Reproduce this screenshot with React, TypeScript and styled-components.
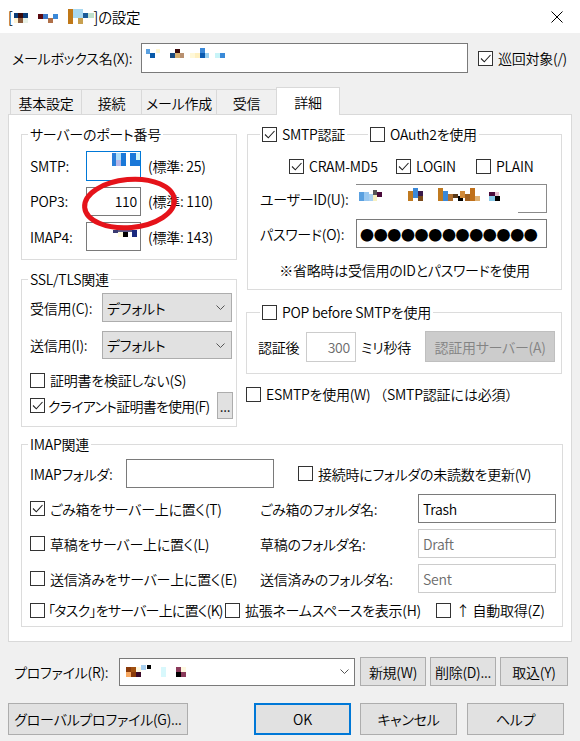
import React from 'react';
import styled, { createGlobalStyle } from 'styled-components';

const GlobalStyle = createGlobalStyle`
  html, body { margin: 0; padding: 0; background: #f0f0f0; }
  body {
    font-family: "Noto Sans CJK JP", "Noto Sans", sans-serif;
    font-size: 14px;
    font-weight: 350;
    line-height: 20px;
    letter-spacing: -0.25px;
    color: #000;
    font-feature-settings: "palt";
  }
  * { box-sizing: border-box; }
`;

type Cell = [number, number, number, number, string];

const MosaicSvg = styled.svg`
  display: block;
  flex-shrink: 0;
`;

const Mosaic = ({ w, h, cells }: { w: number; h: number; cells: Cell[] }) => (
  <MosaicSvg width={w} height={h} viewBox={`0 0 ${w} ${h}`}>
    {cells.map((c, i) => (
      <rect key={i} x={c[0]} y={c[1]} width={c[2]} height={c[3]} fill={c[4]} />
    ))}
  </MosaicSvg>
);

const Window = styled.div`
  position: relative;
  width: 580px;
  height: 741px;
  background: #f0f0f0;
  display: flex;
  flex-direction: column;
  overflow: hidden;
`;

const TitleBar = styled.div`
  height: 33px;
  flex-shrink: 0;
  background: #fff;
  display: flex;
  align-items: center;
  padding-left: 8px;
`;

const TitleText = styled.div`
  display: flex;
  align-items: center;
  font-size: 14.5px;
`;

const CloseBtn = styled.div`
  margin-left: auto;
  width: 46px;
  height: 33px;
  display: flex;
  align-items: center;
  justify-content: center;
`;

const Row = styled.div<{ $mt?: number; $pl?: number; $h?: number }>`
  display: flex;
  align-items: center;
  flex-shrink: 0;
  margin-top: ${(p) => p.$mt ?? 0}px;
  padding-left: ${(p) => p.$pl ?? 0}px;
  height: ${(p) => (p.$h ? `${p.$h}px` : 'auto')};
`;

const FieldLabel = styled.span<{ $w: number; $pl?: number }>`
  width: ${(p) => p.$w}px;
  padding-left: ${(p) => p.$pl ?? 0}px;
  flex-shrink: 0;
  white-space: nowrap;
`;

const TextBox = styled.div<{
  $w: number;
  $h: number;
  $variant?: 'normal' | 'focus' | 'disabled' | 'partial';
  $align?: 'left' | 'right';
  $pad?: string;
}>`
  position: relative;
  width: ${(p) => p.$w}px;
  height: ${(p) => p.$h}px;
  flex-shrink: 0;
  background: #fff;
  border: 1px solid
    ${(p) =>
      p.$variant === 'focus' ? '#0078d7' : p.$variant === 'disabled' ? '#cccccc' : '#7a7a7a'};
  ${(p) => (p.$variant === 'partial' ? 'border-color: #8a8a8a; border-left: none; border-bottom: none;' : '')}
  color: ${(p) => (p.$variant === 'disabled' ? '#6d6d6d' : '#000')};
  display: flex;
  align-items: center;
  justify-content: ${(p) => (p.$align === 'right' ? 'flex-end' : 'flex-start')};
  padding: ${(p) => p.$pad ?? '0 4px'};
  overflow: hidden;
  white-space: nowrap;
  &::after {
    content: ${(p) => (p.$variant === 'partial' ? '""' : 'none')};
    position: absolute;
    right: 0;
    bottom: 0;
    width: 28px;
    height: 1px;
    background: #8a8a8a;
  }
`;

const Hint = styled.span`
  margin-left: 7px;
  white-space: nowrap;
`;

const BoxEl = styled.span`
  width: 15px;
  height: 15px;
  border: 1px solid #333;
  background: #fff;
  display: inline-flex;
  align-items: center;
  justify-content: center;
  flex-shrink: 0;
`;

const CheckItem = styled.div<{ $w?: number; $ml?: number; $tight?: boolean }>`
  display: flex;
  align-items: center;
  gap: ${(p) => (p.$tight ? 3 : 5)}px;
  white-space: nowrap;
  flex-shrink: 0;
  width: ${(p) => (p.$w ? `${p.$w}px` : 'auto')};
  margin-left: ${(p) => p.$ml ?? 0}px;
  letter-spacing: ${(p) => (p.$tight ? '-0.75px' : 'inherit')};
`;

const Check = ({
  checked,
  children,
  w,
  ml,
  tight,
}: {
  checked?: boolean;
  children: React.ReactNode;
  w?: number;
  ml?: number;
  tight?: boolean;
}) => (
  <CheckItem $w={w} $ml={ml} $tight={tight}>
    <BoxEl>
      {checked && (
        <svg width="13" height="13" viewBox="0 0 13 13">
          <polyline points="2,6.5 5.3,9.8 11.5,3" fill="none" stroke="#222" strokeWidth="1.1" />
        </svg>
      )}
    </BoxEl>
    <span>{children}</span>
  </CheckItem>
);

const TabStrip = styled.div`
  display: flex;
  align-items: flex-end;
  height: 27px;
  margin-top: 14px;
  margin-left: 10px;
  flex-shrink: 0;
`;

const Tab = styled.div<{ $w: number; $active?: boolean }>`
  position: relative;
  width: ${(p) => p.$w}px;
  height: ${(p) => (p.$active ? 28 : 25)}px;
  margin-left: -1px;
  margin-bottom: ${(p) => (p.$active ? -1 : 0)}px;
  z-index: ${(p) => (p.$active ? 2 : 0)};
  background: ${(p) => (p.$active ? '#fff' : '#f0f0f0')};
  border: 1px solid #d9d9d9;
  border-bottom: none;
  display: flex;
  align-items: center;
  justify-content: center;
  padding-top: ${(p) => (p.$active ? 0 : 2)}px;
  white-space: nowrap;
  &:first-child {
    margin-left: 0;
  }
`;

const Panel = styled.div`
  position: relative;
  z-index: 1;
  margin-left: 8px;
  width: 564px;
  height: 528px;
  flex-shrink: 0;
  background: #fff;
  border: 1px solid #d9d9d9;
  padding: 19px 0 0 12px;
  display: flex;
  flex-direction: column;
`;

const TopGrid = styled.div`
  display: grid;
  grid-template-columns: 216px 316px;
  column-gap: 9px;
  align-items: start;
`;

const Column = styled.div`
  display: flex;
  flex-direction: column;
`;

const Group = styled.div<{ $w: number; $h: number; $mt?: number; $ml?: number }>`
  position: relative;
  width: ${(p) => p.$w}px;
  height: ${(p) => p.$h}px;
  margin-top: ${(p) => p.$mt ?? 0}px;
  margin-left: ${(p) => p.$ml ?? 0}px;
  border: 1px solid #dcdcdc;
  flex-shrink: 0;
`;

const Legend = styled.div<{ $left: number }>`
  position: absolute;
  top: -11px;
  left: ${(p) => p.$left}px;
  padding: 0 2px;
  background: #fff;
  display: flex;
  align-items: center;
  height: 20px;
  white-space: nowrap;
`;

const GroupBody = styled.div<{ $pt: number; $pl: number; $gap?: number }>`
  display: flex;
  flex-direction: column;
  padding-top: ${(p) => p.$pt}px;
  padding-left: ${(p) => p.$pl}px;
  gap: ${(p) => p.$gap ?? 0}px;
`;

const SelectBox = styled.div<{ $w: number; $h: number; $white?: boolean }>`
  width: ${(p) => p.$w}px;
  height: ${(p) => p.$h}px;
  flex-shrink: 0;
  background: ${(p) => (p.$white ? '#fff' : '#e1e1e1')};
  border: 1px solid ${(p) => (p.$white ? '#7a7a7a' : '#adadad')};
  display: flex;
  align-items: center;
  padding-left: ${(p) => (p.$white ? 0 : 4)}px;
  white-space: nowrap;
`;

const ChevronSvg = styled.svg<{ $mr: number }>`
  margin-left: auto;
  margin-right: ${(p) => p.$mr}px;
  flex-shrink: 0;
`;

const Chevron = ({ mr }: { mr: number }) => (
  <ChevronSvg $mr={mr} width="9" height="5" viewBox="0 0 9 5">
    <polyline points="0.5,0.5 4.5,4.5 8.5,0.5" fill="none" stroke="#555" strokeWidth="1" />
  </ChevronSvg>
);

const Btn = styled.button<{ $w: number; $h: number; $primary?: boolean; $off?: boolean; $ml?: number }>`
  width: ${(p) => p.$w}px;
  height: ${(p) => p.$h}px;
  margin-left: ${(p) => p.$ml ?? 0}px;
  flex-shrink: 0;
  padding: 0;
  font: inherit;
  font-feature-settings: inherit;
  letter-spacing: inherit;
  line-height: 20px;
  background: ${(p) => (p.$off ? '#cccccc' : '#e1e1e1')};
  color: ${(p) => (p.$off ? '#838383' : '#000')};
  border: ${(p) => (p.$primary ? '2px solid #0078d7' : `1px solid ${p.$off ? '#bfbfbf' : '#adadad'}`)};
  display: flex;
  align-items: center;
  justify-content: center;
  white-space: nowrap;
`;

const Note = styled.div`
  margin-top: 12px;
  text-align: center;
  height: 20px;
  white-space: nowrap;
`;

const NoPalt = styled.span`
  font-feature-settings: normal;
`;

const Dots = styled.span`
  font-size: 14px;
  letter-spacing: -0.35px;
  font-weight: 400;
  font-feature-settings: normal;
`;

const Overlay = styled.svg`
  position: absolute;
  left: 0;
  top: 0;
  pointer-events: none;
  z-index: 10;
`;

const titleCells: Cell[] = [
  [1, 4, 4, 5, '#0b3d78'], [5, 4, 5, 5, '#3a0a0a'], [5, 9, 5, 5, '#8a5a3a'], [10, 4, 5, 5, '#0b3d78'],
  [1, 9, 4, 5, '#fff3d4'], [10, 9, 5, 5, '#e8f2e8'],
  [25, 5, 5, 5, '#5a0a10'], [30, 5, 5, 5, '#3a78c8'], [35, 9, 5, 5, '#b07048'], [40, 5, 5, 5, '#3a88d8'],
  [55, 0, 5, 15, '#c07818'], [60, 0, 10, 9, '#a8d8f0'], [65, 9, 5, 6, '#c8a050'], [70, 4, 5, 5, '#1a5a98'],
  [75, 4, 6, 5, '#c0e0cc'],
];

const mailboxCells: Cell[] = [
  [4, 5, 4, 5, '#5aa0e0'], [8, 9, 5, 5, '#0a5aa8'], [14, 5, 4, 4, '#fff6d0'],
  [28, 9, 5, 5, '#1a4a80'], [33, 5, 5, 4, '#3a0a0a'], [33, 9, 5, 5, '#d8b070'], [38, 9, 4, 5, '#b89070'],
  [48, 9, 5, 5, '#fff8d8'], [53, 9, 5, 5, '#fff0c0'], [58, 4, 5, 5, '#3a88d8'], [58, 9, 5, 5, '#0a5ab0'],
  [63, 9, 4, 5, '#9ad0f0'],
  [73, 9, 5, 5, '#c8f4f8'], [78, 9, 5, 5, '#3a8ad8'],
];

const smtpCells: Cell[] = [
  [25, 1, 4, 13, '#2a7fd8'], [29, 1, 5, 7, '#b0e0f8'], [29, 8, 5, 6, '#b8b8e8'], [34, 1, 5, 13, '#1a78d8'],
  [39, 1, 4, 13, '#ffffff'], [43, 1, 6, 13, '#1a78d8'], [49, 1, 4, 7, '#d0f4f8'], [49, 8, 4, 6, '#1a78d8'],
];

const imapCells: Cell[] = [
  [26, 7, 5, 3, '#3a3a70'], [31, 7, 14, 2, '#5a5a88'], [31, 9, 5, 5, '#fffbe0'], [36, 9, 5, 5, '#000'],
  [45, 7, 5, 7, '#1a2a80'],
];

const userCells: Cell[] = [
  [3, 7, 5, 9, '#5aa0e0'], [8, 7, 5, 9, '#9ac8f0'], [13, 9, 4, 7, '#a8d0f0'], [17, 5, 4, 5, '#555'],
  [17, 10, 4, 6, '#f8f0c0'], [21, 7, 5, 5, '#4a0a3a'],
  [52, 6, 5, 10, '#c07a20'], [57, 3, 5, 10, '#3a88d8'], [62, 6, 5, 5, '#3a1a4a'], [62, 11, 5, 5, '#7a4a1a'],
  [82, 3, 5, 13, '#c07a20'], [87, 6, 5, 10, '#3a88d8'], [92, 9, 5, 7, '#b07030'], [97, 9, 5, 4, '#5a3a1a'],
  [102, 11, 5, 5, '#000'], [104, 6, 5, 7, '#d08a3a'], [109, 9, 5, 7, '#a06020'], [114, 3, 5, 13, '#c0701a'],
  [119, 11, 5, 5, '#e0b070'], [133, 7, 6, 4, '#4a0a3a'], [139, 7, 4, 4, '#e8c0d0'], [139, 11, 5, 5, '#000'],
  [133, 11, 6, 5, '#88c8e8'],
];

const profileCells: Cell[] = [
  [6, 8, 5, 5, '#8a3a0a'], [11, 8, 5, 5, '#a05010'], [6, 13, 5, 5, '#f8a860'], [11, 13, 5, 5, '#8a3a0a'],
  [16, 13, 5, 5, '#3a0a2a'], [16, 8, 5, 5, '#fff8e0'], [21, 6, 5, 5, '#a8d0f0'], [27, 6, 4, 4, '#000'],
  [41, 8, 5, 10, '#d8f8fc'],
  [56, 8, 5, 5, '#8a3a5a'], [56, 13, 5, 5, '#000'], [61, 8, 5, 5, '#fff8e0'], [61, 13, 5, 5, '#8a3a5a'],
];

export default function App() {
  return (
    <>
      <GlobalStyle />
      <Window>
        <TitleBar>
          <TitleText>
            <span>[</span>
            <Mosaic w={81} h={16} cells={titleCells} />
            <span>]の設定</span>
          </TitleText>
          <CloseBtn>
            <svg width="12" height="12" viewBox="0 0 12 12">
              <path d="M0.5 0.5 L11.5 11.5 M11.5 0.5 L0.5 11.5" stroke="#000" strokeWidth="1" />
            </svg>
          </CloseBtn>
        </TitleBar>

        <Row $mt={10} $pl={12} $h={30}>
          <FieldLabel $w={129}>メールボックス名(X):</FieldLabel>
          <TextBox $w={327} $h={30} $pad="0">
            <Mosaic w={325} h={28} cells={mailboxCells} />
          </TextBox>
          <Check checked ml={10}>
            巡回対象(/)
          </Check>
        </Row>

        <TabStrip>
          <Tab $w={72}>基本設定</Tab>
          <Tab $w={61}>接続</Tab>
          <Tab $w={76}>メール作成</Tab>
          <Tab $w={61}>受信</Tab>
          <Tab $w={64} $active>
            詳細
          </Tab>
        </TabStrip>

        <Panel>
          <TopGrid>
            <Column>
              <Group $w={216} $h={126}>
                <Legend $left={6}>サーバーのポート番号</Legend>
                <GroupBody $pt={16} $pl={8} $gap={5.5}>
                  <Row $h={30}>
                    <FieldLabel $w={56}>SMTP:</FieldLabel>
                    <TextBox $w={55} $h={30} $variant="focus" $pad="0">
                      <Mosaic w={53} h={28} cells={smtpCells} />
                    </TextBox>
                    <Hint>(標準: 25)</Hint>
                  </Row>
                  <Row $h={29}>
                    <FieldLabel $w={56}>POP3:</FieldLabel>
                    <TextBox $w={55} $h={29} $align="right" $pad="0 3px 0 0">
                      110
                    </TextBox>
                    <Hint>(標準: 110)</Hint>
                  </Row>
                  <Row $h={29} $mt={1}>
                    <FieldLabel $w={56}>IMAP4:</FieldLabel>
                    <TextBox $w={55} $h={29} $pad="0">
                      <Mosaic w={53} h={27} cells={imapCells} />
                    </TextBox>
                    <Hint>(標準: 143)</Hint>
                  </Row>
                </GroupBody>
              </Group>

              <Group $w={216} $h={148} $mt={19}>
                <Legend $left={6}>SSL/TLS関連</Legend>
                <GroupBody $pt={13} $pl={8}>
                  <Row $h={29}>
                    <FieldLabel $w={72}>受信用(C):</FieldLabel>
                    <SelectBox $w={130} $h={29}>
                      デフォルト
                      <Chevron mr={6} />
                    </SelectBox>
                  </Row>
                  <Row $h={28} $mt={9}>
                    <FieldLabel $w={72}>送信用(I):</FieldLabel>
                    <SelectBox $w={130} $h={28}>
                      デフォルト
                      <Chevron mr={6} />
                    </SelectBox>
                  </Row>
                  <Row $h={20} $mt={11}>
                    <Check>証明書を検証しない(S)</Check>
                  </Row>
                  <Row $h={27} $mt={2}>
                    <Check checked w={187} tight>
                      クライアント証明書を使用(F)
                    </Check>
                    <Btn $w={16} $h={27}>
                      ...
                    </Btn>
                  </Row>
                </GroupBody>
              </Group>
            </Column>

            <Column>
              <Group $w={315} $h={156} $ml={1}>
                <Legend $left={12}>
                  <Check checked>SMTP認証</Check>
                </Legend>
                <Legend $left={120}>
                  <Check>OAuth2を使用</Check>
                </Legend>
                <GroupBody $pt={21} $pl={0}>
                  <Row $h={20} $pl={41}>
                    <Check checked w={107}>
                      CRAM-MD5
                    </Check>
                    <Check checked w={80}>
                      LOGIN
                    </Check>
                    <Check>PLAIN</Check>
                  </Row>
                  <Row $h={29} $mt={8} $pl={12}>
                    <FieldLabel $w={96}>ユーザーID(U):</FieldLabel>
                    <TextBox $w={191} $h={29} $variant="partial" $pad="0">
                      <Mosaic w={190} h={28} cells={userCells} />
                    </TextBox>
                  </Row>
                  <Row $h={29} $mt={6} $pl={12}>
                    <FieldLabel $w={96}>パスワード(O):</FieldLabel>
                    <TextBox $w={191} $h={29} $pad="0 0 0 3px">
                      <Dots>●●●●●●●●●●●●●</Dots>
                    </TextBox>
                  </Row>
                  <Note>※省略時は受信用のIDとパスワードを使用</Note>
                </GroupBody>
              </Group>

              <Group $w={316} $h={62} $mt={22}>
                <Legend $left={13}>
                  <Check>POP before SMTPを使用</Check>
                </Legend>
                <GroupBody $pt={18} $pl={11}>
                  <Row $h={31}>
                    <FieldLabel $w={48}>認証後</FieldLabel>
                    <TextBox $w={50} $h={30} $variant="disabled" $align="right" $pad="0 5px 0 0">
                      300
                    </TextBox>
                    <FieldLabel $w={69} $pl={5}>
                      ミリ秒待
                    </FieldLabel>
                    <Btn $w={130} $h={31} $off>
                      認証用サーバー(A)
                    </Btn>
                  </Row>
                </GroupBody>
              </Group>

              <Row $h={20} $mt={10}>
                <Check>
                  ESMTPを使用(W) <NoPalt>（SMTP認証には必須）</NoPalt>
                </Check>
              </Row>
            </Column>
          </TopGrid>

          <Group $w={542} $h={183} $mt={17}>
            <Legend $left={6}>IMAP関連</Legend>
            <GroupBody $pt={14} $pl={8} $gap={6}>
              <Row $h={29}>
                <FieldLabel $w={96}>IMAPフォルダ:</FieldLabel>
                <TextBox $w={148} $h={29} />
                <Check ml={24}>接続時にフォルダの未読数を更新(V)</Check>
              </Row>
              <Row $h={29}>
                <Check checked w={230}>
                  ごみ箱をサーバー上に置く(T)
                </Check>
                <FieldLabel $w={158}>ごみ箱のフォルダ名:</FieldLabel>
                <TextBox $w={138} $h={29}>
                  Trash
                </TextBox>
              </Row>
              <Row $h={29}>
                <Check w={230}>草稿をサーバー上に置く(L)</Check>
                <FieldLabel $w={158}>草稿のフォルダ名:</FieldLabel>
                <TextBox $w={138} $h={29} $variant="disabled">
                  Draft
                </TextBox>
              </Row>
              <Row $h={29}>
                <Check w={230}>送信済みをサーバー上に置く(E)</Check>
                <FieldLabel $w={158}>送信済みのフォルダ名:</FieldLabel>
                <TextBox $w={138} $h={29} $variant="disabled">
                  Sent
                </TextBox>
              </Row>
              <Row $h={20} $mt={1}>
                <Check w={195} tight>
                  「タスク」をサーバー上に置く(K)
                </Check>
                <Check w={211}>拡張ネームスペースを表示(H)</Check>
                <Check>↑ 自動取得(Z)</Check>
              </Row>
            </GroupBody>
          </Group>
        </Panel>

        <Row $mt={15} $pl={14} $h={29}>
          <FieldLabel $w={105}>プロファイル(R):</FieldLabel>
          <SelectBox $w={236} $h={28} $white>
            <Mosaic w={80} h={26} cells={profileCells} />
            <Chevron mr={5} />
          </SelectBox>
          <Btn $w={66} $h={29} $ml={5}>
            新規(W)
          </Btn>
          <Btn $w={66} $h={29} $ml={4}>
            削除(D)...
          </Btn>
          <Btn $w={68} $h={29} $ml={4}>
            取込(Y)
          </Btn>
        </Row>

        <Row $mt={17} $pl={8} $h={32}>
          <Btn $w={180} $h={32}>
            グローバルプロファイル(G)...
          </Btn>
          <Btn $w={97} $h={32} $ml={66} $primary>
            OK
          </Btn>
          <Btn $w={97} $h={32} $ml={9}>
            キャンセル
          </Btn>
          <Btn $w={97} $h={32} $ml={10}>
            ヘルプ
          </Btn>
        </Row>

        <Overlay width="580" height="741" viewBox="0 0 580 741">
          <ellipse
            cx="129.5"
            cy="203.5"
            rx="45"
            ry="24"
            transform="rotate(-5 129.5 203.5)"
            fill="none"
            stroke="#e5131a"
            strokeWidth="5"
          />
        </Overlay>
      </Window>
    </>
  );
}
